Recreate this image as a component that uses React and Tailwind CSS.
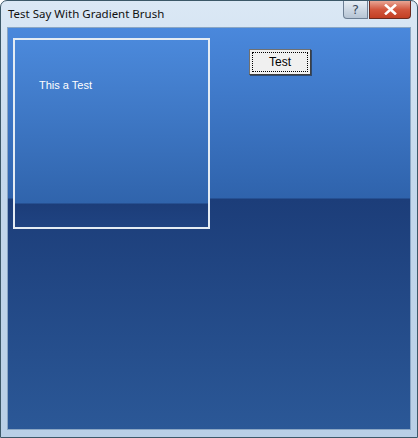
export default function App() {
  return (
    <div className="w-[418px] h-[438px] flex flex-col rounded-t-[7px] border border-[#3c5868] bg-[linear-gradient(180deg,#dbe8f5_0%,#c4d8ec_40%,#b9cfe6_100%)] font-['Liberation_Sans',sans-serif]">
      {/* title bar */}
      <div className="h-[26px] flex items-start justify-between pl-[7px] pr-[6px]">
        <span className="mt-[5px] text-[11.5px] leading-[16px] text-[#111] font-['Noto_Sans',sans-serif]">
          Test Say With Gradient Brush
        </span>
        <div className="flex gap-[1px]">
          <div className="w-[25px] h-[18px] flex items-center justify-center rounded-bl-[4px] border border-t-0 border-[#6d7f94] bg-[linear-gradient(180deg,#e6edf5_0%,#cdd8e4_50%,#b6c4d4_100%)] text-[13px] leading-none text-[#3a4b5e] font-['DejaVu_Sans',sans-serif]">
            ?
          </div>
          <div className="w-[42px] h-[18px] flex items-center justify-center rounded-br-[4px] border border-t-0 border-[#6b2a1f] bg-[linear-gradient(180deg,#e8a594_0%,#d2573e_50%,#c23f24_100%)]">
            <svg width="13" height="11" viewBox="0 0 13 11">
              <path d="M2 1.5 L11 9.5 M11 1.5 L2 9.5" stroke="#ffffff" strokeWidth="2.6" strokeLinecap="square" />
            </svg>
          </div>
        </div>
      </div>

      {/* client area */}
      <div className="mx-[6px] h-[403px] flex items-start gap-[39px] pl-[5px] pt-[10px] border border-[#8aa6c4] bg-[linear-gradient(180deg,#4a88dc_0px,#2f63ac_170px,#1c3d79_171px,#2b5897_403px)]">
        <div className="w-[197px] h-[191px] border-2 border-[#e4ecf4] bg-[linear-gradient(180deg,#4b89db_0px,#3064ac_163px,#1c3d79_164px,#1f4382_187px)] pl-[24px] pt-[32px]">
          <span className="text-[11px] leading-[14px] text-white">This a Test</span>
        </div>
        <div className="mt-[11px] w-[62px] h-[26px] p-[2px] border border-[#707070] border-r-[#404040] border-b-[#404040] bg-[#f0f0f0] shadow-[1px_1px_0_#30496c]">
          <div className="h-full border border-dotted border-[#000] flex items-center justify-center text-[12px] text-black">
            Test
          </div>
        </div>
      </div>
    </div>
  );
}
